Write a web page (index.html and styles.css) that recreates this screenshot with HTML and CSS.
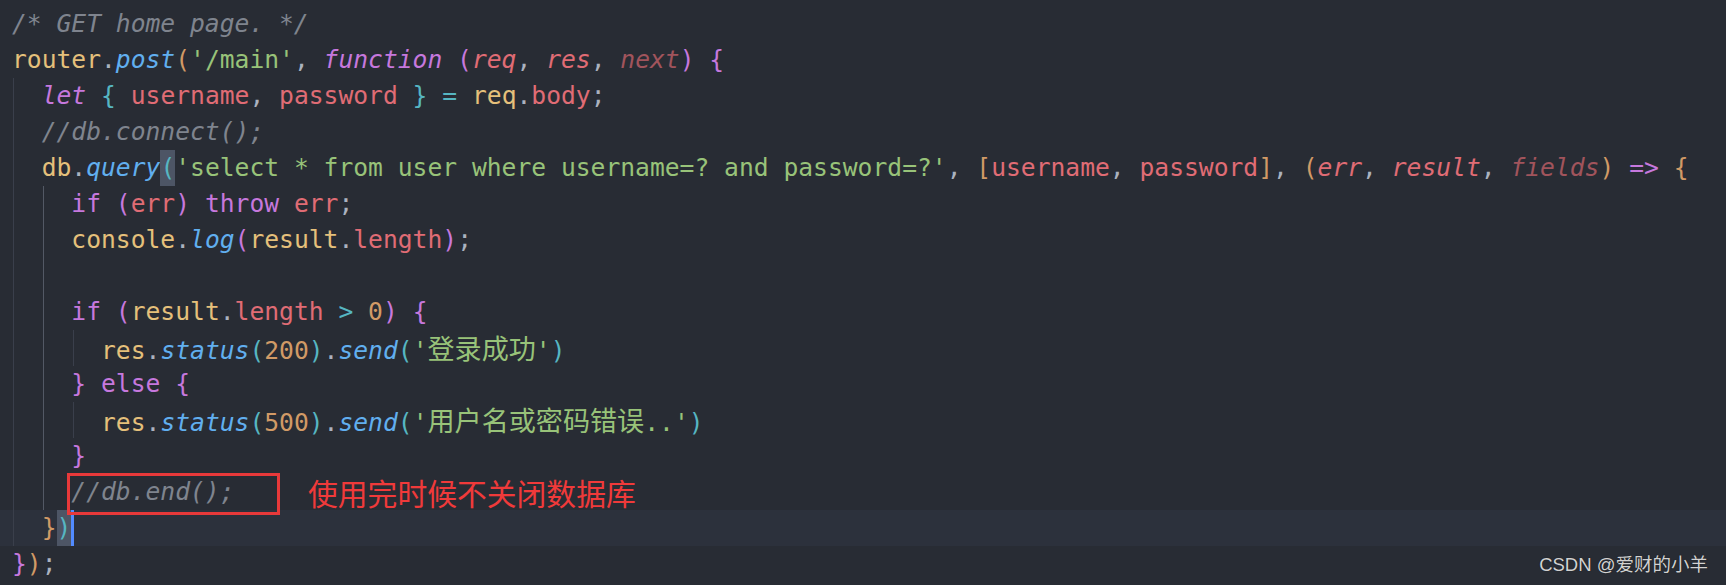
FILE: index.html
```html
<!DOCTYPE html>
<html lang="zh-CN">
<head>
<meta charset="utf-8">
<title>code</title>
<link rel="stylesheet" href="styles.css">
</head>
<body>
<div class="editor">
  <div class="code">
<div class="line"><span class="kw">}</span><span class="o">)</span><span class="p">;</span></div>
<div class="line"><span class="cm">/* GET home page. */</span></div>
<div class="line"><span class="v">router</span><span class="p">.</span><span class="f">post</span><span class="o">(</span><span class="s">'/main'</span><span class="p">, </span><span class="kwi">function</span> <span class="kw">(</span><span class="ri">req</span><span class="p">, </span><span class="ri">res</span><span class="p">, </span><span class="rf">next</span><span class="kw">)</span> <span class="kw">{</span></div>
<div class="line g1">  <span class="kwi">let</span> <span class="c">{</span> <span class="r">username</span><span class="p">, </span><span class="r">password</span> <span class="c">}</span> <span class="c">=</span> <span class="v">req</span><span class="p">.</span><span class="r">body</span><span class="p">;</span></div>
<div class="line g1">  <span class="cm">//db.connect();</span></div>
<div class="line g1">  <span class="v">db</span><span class="p">.</span><span class="f">query</span><span class="c match">(</span><span class="s">'select * from user where username=? and password=?'</span><span class="p">, </span><span class="o">[</span><span class="r">username</span><span class="p">, </span><span class="r">password</span><span class="o">]</span><span class="p">, </span><span class="o">(</span><span class="ri">err</span><span class="p">, </span><span class="ri">result</span><span class="p">, </span><span class="rf">fields</span><span class="o">)</span> <span class="kw">=&gt;</span> <span class="o">{</span></div>
<div class="line g12">    <span class="kw">if</span> <span class="kw">(</span><span class="r">err</span><span class="kw">)</span> <span class="kw">throw</span> <span class="r">err</span><span class="p">;</span></div>
<div class="line g12">    <span class="v">console</span><span class="p">.</span><span class="f">log</span><span class="kw">(</span><span class="v">result</span><span class="p">.</span><span class="r">length</span><span class="kw">)</span><span class="p">;</span></div>
<div class="line g12"> </div>
<div class="line g12">    <span class="kw">if</span> <span class="kw">(</span><span class="v">result</span><span class="p">.</span><span class="r">length</span> <span class="c">&gt;</span> <span class="o">0</span><span class="kw">)</span> <span class="kw">{</span></div>
<div class="line g123">      <span class="v">res</span><span class="p">.</span><span class="f">status</span><span class="c">(</span><span class="o">200</span><span class="c">)</span><span class="p">.</span><span class="f">send</span><span class="c">(</span><span class="s">'<span class="cjk">登录成功</span>'</span><span class="c">)</span></div>
<div class="line g12">    <span class="kw">}</span> <span class="kw">else</span> <span class="kw">{</span></div>
<div class="line g123">      <span class="v">res</span><span class="p">.</span><span class="f">status</span><span class="c">(</span><span class="o">500</span><span class="c">)</span><span class="p">.</span><span class="f">send</span><span class="c">(</span><span class="s">'<span class="cjk">用户名或密码错误</span>..'</span><span class="c">)</span></div>
<div class="line g12">    <span class="kw">}</span></div>
<div class="line g12 note-line">    <span class="cm">//db.end();</span><span class="note-box"></span><span class="note-text">使用完时候不关闭数据库</span></div>
<div class="line g1 current">  <span class="o">}</span><span class="c match">)</span><span class="cursor"></span></div>
<div class="line"><span class="kw">}</span><span class="o">)</span><span class="p">;</span></div>
  </div>
  <div class="watermark">CSDN @爱财的小羊</div>
</div>
</body>
</html>
```

FILE: styles.css
```css
html, body {
  margin: 0;
  padding: 0;
  background: #282c34;
  overflow: hidden;
}

.editor {
  position: relative;
  width: 1726px;
  height: 585px;
  overflow: hidden;
  background: #282c34;
}

.code {
  margin-top: -30px;
  font-family: "DejaVu Sans Mono", "Noto Sans CJK SC", monospace;
  font-size: 24.65px;
  color: #abb2bf;
}

.line {
  position: relative;
  height: 36px;
  line-height: 36px;
  padding-left: 12px;
  white-space: pre;
}

.g1 {
  background: linear-gradient(#3a3f4b, #3a3f4b) 13px 0 / 1px 100% no-repeat;
}

.g12 {
  background:
    linear-gradient(#3a3f4b, #3a3f4b) 13px 0 / 1px 100% no-repeat,
    linear-gradient(#535965, #535965) 43px 0 / 1px 100% no-repeat;
}

.g123 {
  background:
    linear-gradient(#3a3f4b, #3a3f4b) 13px 0 / 1px 100% no-repeat,
    linear-gradient(#535965, #535965) 43px 0 / 1px 100% no-repeat,
    linear-gradient(#3a3f4b, #3a3f4b) 73px 0 / 1px 100% no-repeat;
}

.current {
  background:
    linear-gradient(#3a3f4b, #3a3f4b) 13px 0 / 1px 100% no-repeat,
    #2c313c;
}

.v { color: #e5c07b; }
.f { color: #61afef; font-style: italic; }
.s { color: #98c379; }
.p { color: #abb2bf; }
.kw { color: #c678dd; }
.kwi { color: #c678dd; font-style: italic; }
.r { color: #e06c75; }
.ri { color: #e06c75; font-style: italic; }
.rf { color: #a1545c; font-style: italic; }
.o { color: #d19a66; }
.c { color: #56b6c2; }
.cm { color: #7f848e; font-style: italic; }

.cjk {
  font-family: "Noto Sans CJK SC", sans-serif;
  font-size: 27.1px;
}

.match {
  display: inline-block;
  height: 36px;
  vertical-align: top;
  background: #4d5565;
}

.cursor {
  display: inline-block;
  width: 3px;
  height: 36px;
  vertical-align: top;
  background: #528bff;
}

.note-box {
  position: absolute;
  z-index: 2;
  left: 67px;
  top: -1px;
  width: 207px;
  height: 36px;
  border: 3px solid #e8393a;
}

.note-text {
  position: absolute;
  z-index: 2;
  left: 308px;
  top: 0;
  line-height: 36px;
  font-family: "Noto Sans CJK SC", sans-serif;
  font-size: 29.8px;
  color: #f03a3a;
}

.watermark {
  position: absolute;
  right: 18px;
  bottom: 8px;
  font-family: "Liberation Sans", "Noto Sans CJK SC", sans-serif;
  font-size: 18.5px;
  line-height: 24px;
  color: #d2d2d2;
  text-shadow: 0 0 1px rgba(0, 0, 0, 0.6);
}
```
